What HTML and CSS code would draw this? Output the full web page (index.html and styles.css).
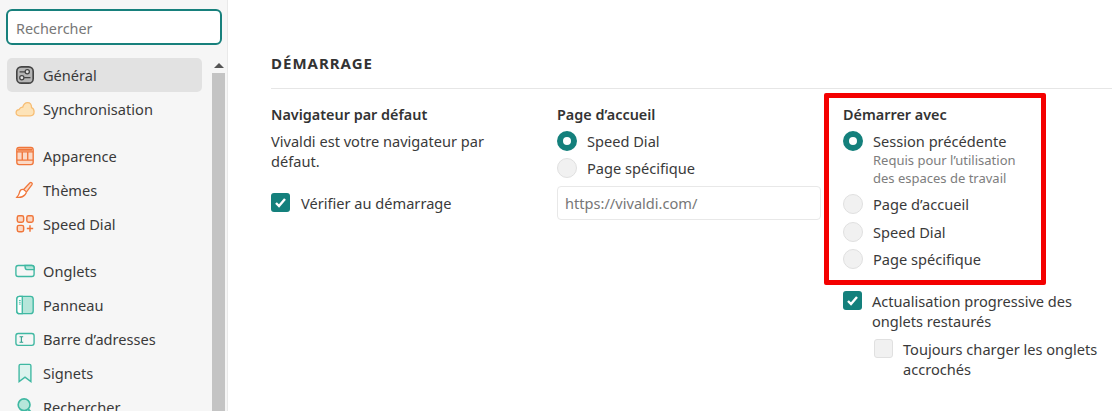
FILE: index.html
```html
<!DOCTYPE html>
<html lang="fr">
<head>
  <meta charset="UTF-8" />
  <title>Vivaldi - Réglages</title>
  <link rel="stylesheet" href="styles.css">
</head>
<body>
  <div class="settings">
    <aside class="sidebar">
      <div class="search-box">Rechercher</div>
      <div class="nav-wrap">
        <nav class="nav">
          <div class="nav-group">
            <a class="nav-item active">
              <svg class="icon" viewBox="0 0 22 22" fill="none" stroke="#444" stroke-width="1.4"><rect x="2" y="2" width="18" height="18" rx="5" fill="#b5b5b5" stroke-width="1.8"/><circle cx="13.5" cy="7.5" r="2.3" fill="#e2e2e2"/><circle cx="7.5" cy="14" r="2.3" fill="#e2e2e2"/><path d="M5 7.500h6M10 14h7"/></svg>
              Général
            </a>
            <a class="nav-item">
              <svg class="icon" viewBox="0 0 22 22" fill="#fde3b8" stroke="#f7bd73" stroke-width="1.4"><path d="M5 18.500c-2.300 0-3.800-1.600-3.800-3.500 0-1.800 1.300-3.200 3.200-3.400C5.500 9.800 7 8.800 8.500 9 9.500 5.800 11.500 4 13.800 4c2.800 0 4.400 2.500 4.400 5.500 1.900.8 2.800 2.600 2.800 4.600 0 2.500-1.800 4.400-4.200 4.400z"/></svg>
              Synchronisation
            </a>
          </div>
          <div class="nav-group">
            <a class="nav-item">
              <svg class="icon" viewBox="0 0 22 22" fill="none" stroke="#f0763a" stroke-width="1.5"><rect x="2" y="1.500" width="18" height="19" rx="2.500" fill="#fbd9c6"/><path d="M2 6.500h18M2 15.500h18M8 6.500v9M14 6.500v9"/><path d="M3 4h16" stroke-width="2.500"/></svg>
              Apparence
            </a>
            <a class="nav-item">
              <svg class="icon" viewBox="0 0 22 22" fill="none" stroke="#f0763a" stroke-width="1.4"><path d="M9.500 10.500l7-7.500c1-1 3.200.6 2.200 2l-6 8" fill="#fbd9c6"/><path d="M9.500 10.500c-2.500-.5-4 1-4.500 3-.4 1.800-1.300 3.800-3 5.500 3.500.5 7-.5 9-2.800 1.300-1.400 1.500-2.500 1.500-3.200z" fill="#fff"/></svg>
              Thèmes
            </a>
            <a class="nav-item">
              <svg class="icon" viewBox="0 0 22 22" fill="#fbd9c6" stroke="#f0763a" stroke-width="1.600"><rect x="2.500" y="2" width="7" height="7" rx="1.800"/><rect x="13" y="2" width="7" height="7" rx="1.800"/><rect x="2.500" y="12.500" width="7" height="7" rx="1.800"/><path d="M16.500 12.500v7M13 16h7" fill="none"/></svg>
              Speed Dial
            </a>
          </div>
          <div class="nav-group">
            <a class="nav-item">
              <svg class="icon" viewBox="0 0 22 22" fill="none" stroke="#3fb8a2" stroke-width="1.500"><rect x="1" y="5" width="20" height="12" rx="2.500"/><path d="M11 5.500c0 3 .5 4 2 4h8V7.500C21 6 20 5 18.500 5H11z" fill="#b6e6da"/></svg>
              Onglets
            </a>
            <a class="nav-item">
              <svg class="icon" viewBox="0 0 22 22" fill="none" stroke="#3fb8a2" stroke-width="1.500"><rect x="2" y="1.500" width="18" height="19" rx="3" fill="#b6e6da"/><path d="M8 1.500h-3a3 3 0 0 0-3 3v13a3 3 0 0 0 3 3h3z" fill="#fff"/><path d="M4.300 6h2M4.300 8h2M4.300 10h2" stroke-width="1"/></svg>
              Panneau
            </a>
            <a class="nav-item">
              <svg class="icon" viewBox="0 0 22 22" fill="none" stroke="#3fb8a2" stroke-width="1.500"><rect x="1" y="5" width="20" height="13" rx="2.500"/><path d="M5 8.500h4M5 14.500h4M7 8.500v6" stroke="#2a9d8a" stroke-width="1.200"/></svg>
              Barre d’adresses
            </a>
            <a class="nav-item">
              <svg class="icon" viewBox="0 0 22 22" fill="#dcf3ee" stroke="#3fb8a2" stroke-width="1.500"><path d="M6 1.500h10a1.500 1.500 0 0 1 1.500 1.500v17.500L11 15.500l-6.500 5V3A1.500 1.500 0 0 1 6 1.500z"/></svg>
              Signets
            </a>
            <a class="nav-item">
              <svg class="icon" viewBox="0 0 22 22" fill="#b6e6da" stroke="#3fb8a2" stroke-width="1.800"><circle cx="10" cy="8.500" r="6.500"/><path d="M14.500 13.500l5.500 6" fill="none" stroke-width="2.200"/></svg>
              Rechercher
            </a>
          </div>
        </nav>
        <div class="scrollbar">
          <span class="scroll-arrow"></span>
          <span class="scroll-thumb"></span>
        </div>
      </div>
    </aside>

    <main class="content">
      <h2 class="section-title">DÉMARRAGE</h2>
      <div class="columns">
        <section class="col">
          <h3>Navigateur par défaut</h3>
          <p class="desc">Vivaldi est votre navigateur par défaut.</p>
          <label class="check first">
            <span class="box on"><svg viewBox="0 0 19 19"><path d="M5 10l3 3 6-7" fill="none" stroke="#fff" stroke-width="2.400"/></svg></span>
            <span>Vérifier au démarrage</span>
          </label>
        </section>

        <section class="col">
          <h3>Page d’accueil</h3>
          <label class="radio"><span class="dot on"></span>Speed Dial</label>
          <label class="radio"><span class="dot"></span>Page spécifique</label>
          <div class="url-input">https://vivaldi.com/</div>
        </section>

        <section class="col">
          <h3>Démarrer avec</h3>
          <label class="radio"><span class="dot on"></span>Session précédente</label>
          <p class="note">Requis pour l’utilisation<br>des espaces de travail</p>
          <label class="radio"><span class="dot"></span>Page d’accueil</label>
          <label class="radio"><span class="dot"></span>Speed Dial</label>
          <label class="radio"><span class="dot"></span>Page spécifique</label>
          <label class="check progressive">
            <span class="box on"><svg viewBox="0 0 19 19"><path d="M5 10l3 3 6-7" fill="none" stroke="#fff" stroke-width="2.400"/></svg></span>
            <span>Actualisation progressive des onglets restaurés</span>
          </label>
          <label class="check nested">
            <span class="box"></span>
            <span>Toujours charger les onglets accrochés</span>
          </label>
        </section>
      </div>
      <div class="highlight"></div>
    </main>
  </div>
</body>
</html>
```

FILE: styles.css
```css
* {
  box-sizing: border-box;
}
html, body {
  margin: 0;
  height: 411px;
  overflow: hidden;
}
body {
  font-family: "Noto Sans", "Open Sans", sans-serif;
  font-size: 14.6px;
  color: #3a3a3a;
  background: #fff;
}
.settings {
  display: flex;
  height: 411px;
}

/* sidebar */
.sidebar {
  width: 228px;
  flex: none;
  background: #f6f6f6;
  border-right: 1px solid #e9e9e9;
  padding: 9px 0 0 6px;
  display: flex;
  flex-direction: column;
  overflow: hidden;
}
.search-box {
  width: 216px;
  height: 36px;
  background: #fff;
  border: 2px solid #17807c;
  border-radius: 6px;
  padding: 0 8px;
  line-height: 36px;
  color: #777;
  font-size: 14.4px;
}
.nav-wrap {
  display: flex;
  margin: 13px 0 0 1px;
  flex: 1;
  min-height: 0;
}
.nav {
  width: 195px;
  flex: none;
}
.nav-group {
  margin-bottom: 13px;
}
.nav-item {
  display: flex;
  align-items: center;
  gap: 8px;
  height: 34px;
  padding-left: 8px;
  border-radius: 5px;
  white-space: nowrap;
}
.nav-item.active {
  background: #e2e2e2;
}
.icon {
  width: 20px;
  height: 20px;
  flex: none;
}
.scrollbar {
  width: 13px;
  margin-left: 10px;
  display: flex;
  flex-direction: column;
  align-items: center;
}
.scroll-arrow {
  width: 0;
  height: 0;
  margin-top: 5px;
  border-left: 5px solid transparent;
  border-right: 5px solid transparent;
  border-bottom: 5px solid #555;
}
.scroll-thumb {
  width: 13px;
  flex: 1;
  margin-top: 5px;
  background: #c4c4c4;
}

/* main area */
.content {
  flex: 1;
  padding: 52px 0 0 43px;
  position: relative;
}
.section-title {
  margin: 0;
  font-size: 15px;
  font-weight: 700;
  letter-spacing: 1px;
  line-height: 22px;
  height: 37px;
  border-bottom: 1px solid #e6e6e6;
  color: #333;
}
.columns {
  display: grid;
  grid-template-columns: 286px 286px 1fr;
  padding-top: 16px;
}
.col h3 {
  margin: 0 0 2px;
  font-size: 14.4px;
  font-weight: 600;
  line-height: 20px;
  color: #333;
}
.desc {
  margin: 6px 0 22px;
  width: 240px;
  line-height: 20px;
}
.check {
  display: flex;
  align-items: flex-start;
  gap: 10px;
  line-height: 21px;
}
.check.first {
  gap: 11px;
}
.box {
  width: 19px;
  height: 19px;
  flex: none;
  border-radius: 3px;
  background: #f1f1f1;
  border: 1px solid #e0e0e0;
}
.box.on {
  background: #14807c;
  border: none;
}
.box svg {
  display: block;
}
.radio {
  display: flex;
  align-items: center;
  gap: 10px;
  height: 27.5px;
}
.dot {
  width: 20px;
  height: 20px;
  flex: none;
  border-radius: 50%;
  background: #f1f1f1;
  border: 1px solid #e0e0e0;
}
.dot.on {
  background: #fff;
  border: 6px solid #14807c;
}
.url-input {
  width: 264px;
  height: 34px;
  margin-top: 4px;
  padding: 0 7px;
  line-height: 32px;
  border: 1px solid #e8e8e8;
  border-radius: 4px;
  color: #777;
}
.note {
  margin: -4px 0 4px 30px;
  font-size: 13px;
  line-height: 18px;
  color: #7d7d7d;
}
.progressive {
  margin-top: 18px;
  width: 260px;
  line-height: 20px;
}
.nested {
  margin: 8px 0 0 31px;
  width: 235px;
  line-height: 20px;
}
.highlight {
  position: absolute;
  left: 596px;
  top: 93px;
  width: 222px;
  height: 192px;
  border: 5px solid #f40000;
  border-radius: 2px;
}
```
